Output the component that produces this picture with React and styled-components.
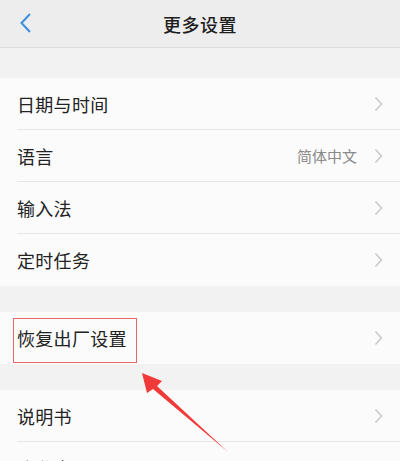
import React from "react";
import styled, { createGlobalStyle } from "styled-components";

const Global = createGlobalStyle`
  html, body { margin: 0; padding: 0; background: #f2f2f2; }
  body { font-family: "Noto Sans CJK SC", "Noto Sans", sans-serif; }
`;

const Page = styled.div`
  position: relative;
  width: 400px;
  height: 461px;
  overflow: hidden;
  background: #f2f2f2;
`;

const Header = styled.div`
  height: 47px;
  border-bottom: 1px solid #dcdcdc;
  background: #ededed;
  display: flex;
  align-items: center;
  justify-content: center;
  position: relative;
`;

const BackBtn = styled.div`
  position: absolute;
  left: 18px;
  top: 12px;
  width: 18px;
  height: 22px;
  display: flex;
`;

const Title = styled.div`
  font-size: 18px;
  font-weight: 500;
  color: #1e1e1e;
  letter-spacing: 0.5px;
`;

const Gap = styled.div`
  height: ${(p) => p.h}px;
  background: #f2f2f2;
`;

const Group = styled.div`
  background: #fbfbfb;
`;

const Row = styled.div`
  height: 52px;
  display: flex;
  align-items: center;
  margin-left: 17px;
  padding-right: 17px;
  box-sizing: border-box;
  border-bottom: ${(p) => (p.last ? "none" : "1px solid #e6e6e6")};
`;

const Label = styled.div`
  flex: 1;
  font-size: 18px;
  color: #222;
  letter-spacing: 0.3px;
`;

const Value = styled.div`
  font-size: 15px;
  color: #8a8a8a;
  margin-right: 17px;
`;

const Chevron = () => (
  <svg width="9" height="16" viewBox="0 0 9 16">
    <path d="M1.5 1.5 L7.5 8 L1.5 14.5" fill="none" stroke="#c6c6c6" strokeWidth="1.4" />
  </svg>
);

const Highlight = styled.div`
  position: absolute;
  left: 13px;
  top: 318px;
  width: 124px;
  height: 45px;
  border: 1.5px solid #e26a6a;
  box-sizing: border-box;
`;

const ArrowSvg = styled.svg`
  position: absolute;
  left: 0;
  top: 0;
  pointer-events: none;
`;

const Item = ({ label, value, last }) => (
  <Row last={last}>
    <Label>{label}</Label>
    {value && <Value>{value}</Value>}
    <Chevron />
  </Row>
);

export default function App() {
  return (
    <>
      <Global />
      <Page>
        <Header>
          <BackBtn>
            <svg width="18" height="22" viewBox="0 0 18 22">
              <path d="M12 2 L3.5 11 L12 20" fill="none" stroke="#3c8fe0" strokeWidth="2" />
            </svg>
          </BackBtn>
          <Title>更多设置</Title>
        </Header>
        <Gap h={30} />
        <Group>
          <Item label="日期与时间" />
          <Item label="语言" value="简体中文" />
          <Item label="输入法" />
          <Item label="定时任务" last />
        </Group>
        <Gap h={26} />
        <Group>
          <Item label="恢复出厂设置" last />
        </Group>
        <Gap h={26} />
        <Group>
          <Item label="说明书" />
          <Item label="隐私声明" last />
        </Group>
        <Highlight />
        <ArrowSvg width="400" height="461" viewBox="0 0 400 461">
          <polygon
            points="142,373 162,381 157,386 228,452 153,389 147,393"
            fill="#f03a3a"
          />
        </ArrowSvg>
      </Page>
    </>
  );
}
